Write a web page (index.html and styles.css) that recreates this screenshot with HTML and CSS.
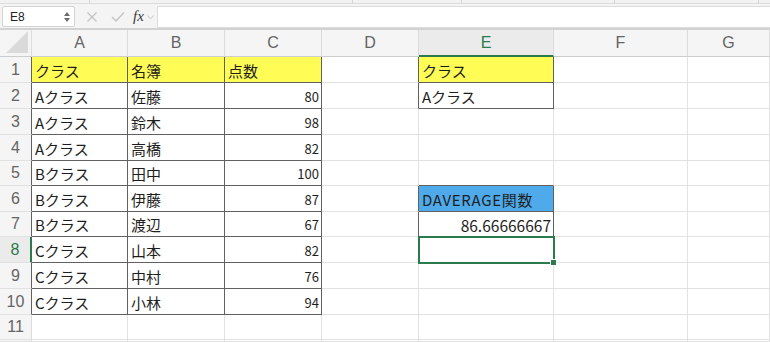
FILE: index.html
```html
<!DOCTYPE html>
<html lang="ja">
<head>
  <meta charset="UTF-8">
  <title>DAVERAGE関数</title>
  <link rel="stylesheet" href="styles.css">
</head>
<body>
  <div class="strip">
    <span class="seg s1"></span><span class="seg s2"></span><span class="seg s3"></span><span class="seg s4"></span><span class="seg s5"></span>
  </div>

  <div class="formula-bar">
    <div class="name-box">
      <span>E8</span>
      <svg class="spin" width="6" height="12" viewBox="0 0 6 12"><path d="M0 5 L3 1 L6 5 Z M0 7 L3 11 L6 7 Z" fill="#6b6b6b"/></svg>
    </div>
    <svg class="fb-icon" width="12" height="12" viewBox="0 0 12 12"><path d="M1.5 1.5 L10.5 10.5 M10.5 1.5 L1.5 10.5" stroke="#c4c4c4" stroke-width="1.4"/></svg>
    <svg class="fb-icon" width="14" height="12" viewBox="0 0 14 12"><path d="M1 6 L5 10 L13 1.5" stroke="#c4c4c4" stroke-width="1.4" fill="none"/></svg>
    <span class="fx">fx</span>
    <svg class="chev" width="7" height="5" viewBox="0 0 7 5"><path d="M0.5 0.5 L3.5 4 L6.5 0.5" stroke="#c4c4c4" fill="none"/></svg>
    <div class="formula-input"></div>
  </div>

  <div class="sheet">
    <!-- header row -->
    <div class="c hd corner"><svg width="24" height="24" viewBox="0 0 24 24"><polygon points="23,1 23,23 1,23" fill="#dadada"/></svg></div>
    <div class="c hd">A</div>
    <div class="c hd">B</div>
    <div class="c hd">C</div>
    <div class="c hd">D</div>
    <div class="c hd sel-col">E</div>
    <div class="c hd">F</div>
    <div class="c hd">G</div>

    <!-- 1 -->
    <div class="c rh edge">1</div>
    <div class="c t yellow">クラス</div>
    <div class="c t yellow">名簿</div>
    <div class="c t yellow">点数</div>
    <div class="c edge"></div>
    <div class="c t yellow">クラス</div>
    <div class="c"></div>
    <div class="c"></div>

    <!-- 2 -->
    <div class="c rh edge">2</div>
    <div class="c t">Aクラス</div>
    <div class="c t">佐藤</div>
    <div class="c t num">80</div>
    <div class="c edge"></div>
    <div class="c t">Aクラス</div>
    <div class="c"></div>
    <div class="c"></div>

    <!-- 3 -->
    <div class="c rh edge">3</div>
    <div class="c t">Aクラス</div>
    <div class="c t">鈴木</div>
    <div class="c t num">98</div>
    <div class="c"></div>
    <div class="c"></div>
    <div class="c"></div>
    <div class="c"></div>

    <!-- 4 -->
    <div class="c rh edge">4</div>
    <div class="c t">Aクラス</div>
    <div class="c t">高橋</div>
    <div class="c t num">82</div>
    <div class="c"></div>
    <div class="c"></div>
    <div class="c"></div>
    <div class="c"></div>

    <!-- 5 -->
    <div class="c rh edge">5</div>
    <div class="c t">Bクラス</div>
    <div class="c t">田中</div>
    <div class="c t num">100</div>
    <div class="c"></div>
    <div class="c edge-b"></div>
    <div class="c"></div>
    <div class="c"></div>

    <!-- 6 -->
    <div class="c rh edge">6</div>
    <div class="c t">Bクラス</div>
    <div class="c t">伊藤</div>
    <div class="c t num">87</div>
    <div class="c edge"></div>
    <div class="c t blue">DAVERAGE関数</div>
    <div class="c"></div>
    <div class="c"></div>

    <!-- 7 -->
    <div class="c rh edge">7</div>
    <div class="c t">Bクラス</div>
    <div class="c t">渡辺</div>
    <div class="c t num">67</div>
    <div class="c edge"></div>
    <div class="c t num big">86.66666667</div>
    <div class="c"></div>
    <div class="c"></div>

    <!-- 8 -->
    <div class="c rh sel-row">8</div>
    <div class="c t">Cクラス</div>
    <div class="c t">山本</div>
    <div class="c t num">82</div>
    <div class="c"></div>
    <div class="c active"><span class="handle"></span></div>
    <div class="c"></div>
    <div class="c"></div>

    <!-- 9 -->
    <div class="c rh edge">9</div>
    <div class="c t">Cクラス</div>
    <div class="c t">中村</div>
    <div class="c t num">76</div>
    <div class="c"></div>
    <div class="c"></div>
    <div class="c"></div>
    <div class="c"></div>

    <!-- 10 -->
    <div class="c rh edge">10</div>
    <div class="c t">Cクラス</div>
    <div class="c t">小林</div>
    <div class="c t num">94</div>
    <div class="c"></div>
    <div class="c"></div>
    <div class="c"></div>
    <div class="c"></div>

    <!-- 11 -->
    <div class="c rh">11</div>
    <div class="c"></div>
    <div class="c"></div>
    <div class="c"></div>
    <div class="c"></div>
    <div class="c"></div>
    <div class="c"></div>
    <div class="c"></div>

    <!-- 12 (only the top edge shows) -->
    <div class="c rh"></div>
    <div class="c"></div>
    <div class="c"></div>
    <div class="c"></div>
    <div class="c"></div>
    <div class="c"></div>
    <div class="c"></div>
    <div class="c"></div>
  </div>
</body>
</html>
```

FILE: styles.css
```css
html, body {
  margin: 0;
  height: 342px;
  overflow: hidden;
  background: #fff;
  font-family: "Liberation Sans", Arial, sans-serif;
}
.strip {
  display: flex;
  height: 3px;
  background: #f2f2f2;
  border-bottom: 1px solid #dcdcdc;
}
.seg {
  border-right: 1px solid #d6d6d6;
}
.s1 { width: 89px; }
.s2 { width: 262px; }
.s3 { width: 108px; }
.s4 { width: 152px; }
.s5 { width: 143px; }

.formula-bar {
  display: flex;
  align-items: center;
  height: 24px;
  background: #f4f4f4;
  border-bottom: 2px solid #d2d2d2;
}
.name-box {
  display: flex;
  align-items: center;
  justify-content: space-between;
  box-sizing: border-box;
  width: 73px;
  height: 21px;
  margin-left: 2px;
  margin-top: 1px;
  padding: 0 4px 0 7px;
  background: #fff;
  border: 1px solid #d4d4d4;
  border-radius: 2px;
  font-size: 12px;
  color: #222;
}
.fb-icon {
  margin-left: 13px;
  margin-top: 1px;
}
.fb-icon:first-of-type { margin-left: 11px; }
.fx {
  margin-left: 8px;
  font-family: "Liberation Serif", serif;
  font-style: italic;
  font-size: 15px;
  color: #3a3a3a;
}
.chev {
  margin-left: 3px;
  margin-top: 2px;
}
.formula-input {
  flex: 1;
  height: 20px;
  margin-left: 3px;
  margin-top: 1px;
  background: #fff;
  border: 1px solid #dcdcdc;
  border-right: none;
}

.sheet {
  display: grid;
  grid-template-columns: 32px 96px 97px 97px 97px 135px 134px 1fr;
  grid-template-rows: 27px 26px 26px 26px 26px 25px 26px 25px 26px 26px 26px 25px 1fr;
}
.c {
  box-sizing: border-box;
  display: flex;
  align-items: center;
  padding: 1px 3px 0 3px;
  border-right: 1px solid #e1e1e1;
  border-bottom: 1px solid #e1e1e1;
  font-family: "Noto Sans CJK JP", sans-serif;
  font-size: 15px;
  color: #1e1e1e;
  white-space: nowrap;
  overflow: hidden;
}
.hd {
  justify-content: center;
  padding: 0;
  background: #f5f5f5;
  border-right-color: #dcdcdc;
  border-bottom-color: #cdcdcd;
  font-family: "Liberation Sans", Arial, sans-serif;
  font-size: 16px;
  color: #646464;
}
.corner {
  align-items: flex-end;
  justify-content: flex-end;
  padding: 0 2px 2px 0;
}
.corner svg { display: block; }
.rh {
  justify-content: center;
  padding: 0;
  background: #f5f5f5;
  border-right-color: #dcdcdc;
  font-family: "Liberation Sans", Arial, sans-serif;
  font-size: 16px;
  color: #646464;
}
.sel-col {
  background: #ebebeb;
  color: #2a7a4b;
  border-bottom: 2px solid #2a7a4b;
}
.sel-row {
  background: #ebebeb;
  color: #2a7a4b;
  border-right: 2px solid #2a7a4b;
}
.t {
  border-right-color: #616161;
  border-bottom-color: #616161;
}
.edge { border-right-color: #616161; }
.edge-b { border-bottom-color: #616161; }
.rh.edge { border-right-color: #616161; }
.yellow { background: #fffd55; }
.blue {
  background: #4eaaea;
  letter-spacing: 0.7px;
}
.num {
  justify-content: flex-end;
  padding-right: 2px;
  font-size: 13px;
}
.big { font-size: 15.5px; }
.active {
  position: relative;
  overflow: visible;
  outline: 2px solid #2a7a4b;
  outline-offset: -1px;
}
.handle {
  position: absolute;
  right: -4px;
  bottom: -4px;
  width: 5px;
  height: 5px;
  background: #2a7a4b;
  border: 1px solid #fff;
  z-index: 2;
}
```
